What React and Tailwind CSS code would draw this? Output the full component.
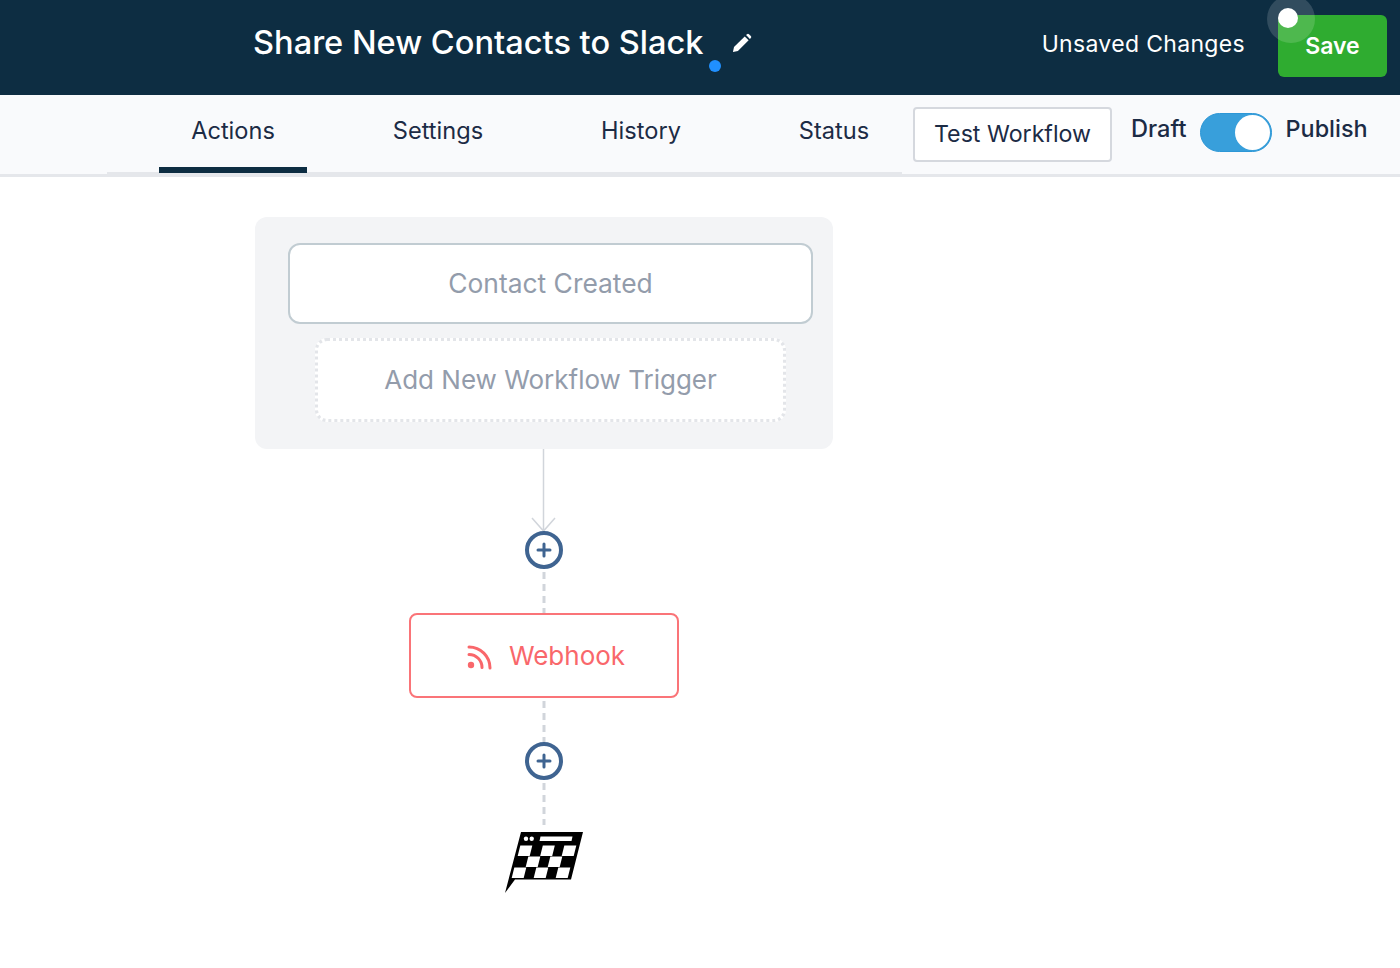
import React from "react";

const tabs = [
  { label: "Actions", className: "ml-[52px] w-[148px] border-[#0d2d42]" },
  { label: "Settings", className: "ml-[57px] w-[148px] border-transparent" },
  { label: "History", className: "ml-[55px] w-[148px] border-transparent" },
  { label: "Status", className: "ml-[51px] w-[136px] border-transparent" },
];

const PlusNode = () => (
  <div className="w-[38px] h-[38px] shrink-0 rounded-full border-4 border-[#3f6491] flex items-center justify-center bg-white">
    <svg width="16" height="16" viewBox="0 0 16 16">
      <path d="M8 2v12M2 8h12" stroke="#3f6491" strokeWidth="3" strokeLinecap="round" />
    </svg>
  </div>
);

const Dashed = ({ height }) => (
  <svg width="4" height={height} viewBox={`0 0 4 ${height}`} className="shrink-0 block">
    <line x1="2" y1="3" x2="2" y2={height} stroke="#d1d5db" strokeWidth="3" strokeDasharray="7 5" />
  </svg>
);

const FinishFlag = () => (
  <svg width="80" height="63" viewBox="0 0 80 63" className="shrink-0 block">
    <path d="M17 1L1 62L11 48.500H67L79 1Z" fill="#000" />
    <g fill="#fff">
      <circle cx="22" cy="7.700" r="2.200" />
      <circle cx="27.700" cy="7.700" r="2.200" />
      <path d="M36.500 5.500H68.500L67.500 10H35.500Z" />
      <path d="M16.300 14.500H28.300L25.700 25H13.700Z" />
      <path d="M38.800 14.500H50.800L48.200 25H36.200Z" />
      <path d="M60.300 14.500H72.300L69.700 25H57.700Z" />
      <path d="M24.300 25.500H36.300L33.700 36H21.700Z" />
      <path d="M46.300 25.500H58.300L55.700 36H43.700Z" />
      <path d="M10.300 36.500H22.300L19.700 47H7.700Z" />
      <path d="M32.300 36.500H44.300L41.700 47H29.700Z" />
      <path d="M54.300 36.500H66.300L63.700 47H51.700Z" />
    </g>
  </svg>
);

const App = () => {
  return (
    <div className="relative min-h-[968px] bg-white font-['Inter',sans-serif] overflow-hidden">
      <header className="h-[95px] bg-[#0d2d42] flex items-start pl-[253px]">
        <h1 className="mt-[22px] text-[32.600px] leading-[40px] font-medium text-white whitespace-nowrap">
          Share New Contacts to Slack
        </h1>
        <svg width="20" height="20" viewBox="0 0 22 22" className="ml-[28px] mt-[33px] shrink-0">
          <path d="M1 21l1.200-5.500L14 3.800l4.300 4.300L6.500 19.800z" fill="#fff" />
          <path d="M15.500 2.300l1-1a1.600 1.600 0 0 1 2.200 0l2 2a1.600 1.600 0 0 1 0 2.200l-1 1z" fill="#fff" />
        </svg>
        <span className="ml-auto mt-[29px] text-[23px] leading-[30px] tracking-[0.33px] text-white whitespace-nowrap">
          Unsaved Changes
        </span>
        <button className="ml-[33px] mr-[13px] mt-[15px] w-[109px] h-[62px] rounded-md bg-[#2fac30] text-white text-[23px] font-semibold">
          Save
        </button>
      </header>

      {/* blue status dot under the title */}
      <span className="absolute left-[709px] top-[60px] w-3 h-3 rounded-full bg-[#2090ff]" />

      {/* click indicator from the recording */}
      <span className="absolute left-[1267px] top-[-5px] w-12 h-12 rounded-full bg-white/15" />
      <span className="absolute left-[1278px] top-[8px] w-5 h-5 rounded-full bg-white" />

      <div className="h-[82px] bg-[#f9fafc] border-b-[3px] border-[#e5e7eb] flex items-start pl-[107px]">
        <nav className="w-[795px] h-[81px] flex items-start border-b-[4px] border-[#e5e7eb]">
          {tabs.map((tab) => (
            <div
              key={tab.label}
              className={`h-[78px] flex items-center justify-center border-b-[6px] text-[23.600px] text-[#1c2b45] ${tab.className}`}
            >
              {tab.label}
            </div>
          ))}
        </nav>
        <button className="ml-[11px] mt-[12px] w-[199px] h-[55px] rounded border-2 border-[#d5d8de] bg-white text-[23.200px] text-[#1c2b45]">
          Test Workflow
        </button>
        <span className="ml-[19px] mt-[18px] text-[23.600px] leading-[32px] font-medium text-[#1c2b45]">Draft</span>
        <div className="ml-[13px] mt-[18px] w-[72px] h-[39px] rounded-full bg-[#389fdb] flex items-center justify-end pr-[1px] border border-[#2d97d6]">
          <span className="w-[35px] h-[35px] rounded-full bg-white" />
        </div>
        <span className="ml-[14px] mt-[18px] text-[23.400px] leading-[32px] font-medium text-[#1c2b45]">Publish</span>
      </div>

      <main className="ml-[255px] mt-[40px] w-[578px] flex flex-col items-center">
        <section className="w-full h-[232px] rounded-xl bg-[#f3f4f6] pl-[33px] pt-[26px]">
          <div className="w-[525px] h-[81px] rounded-xl border-2 border-[#c1ccd2] bg-white flex items-center justify-center text-[26.400px] text-[#939cab]">
            Contact Created
          </div>
          <div className="ml-[27px] mt-[14px] w-[471px] h-[84px] pb-[2px] rounded-xl border-[3px] border-dotted border-[#e3e5e9] bg-white flex items-center justify-center text-[26px] text-[#939cab]">
            Add New Workflow Trigger
          </div>
        </section>

        <svg width="30" height="84" viewBox="0 0 30 84" className="shrink-0 block">
          <path d="M14.500 0V82M3 69l11.500 13L26 69" fill="none" stroke="#d1d5db" strokeWidth="1.500" />
        </svg>
        <div className="-mt-[2px]">
          <PlusNode />
        </div>
        <Dashed height={44} />

        <div className="w-[270px] h-[85px] shrink-0 rounded-lg border-2 border-[#fa7478] bg-white flex items-center justify-center gap-[16px] pl-[4px] text-[26px] text-[#f9676b]">
          <svg width="26" height="26" viewBox="0 0 26 26" fill="none" stroke="#f9676b" strokeWidth="3" strokeLinecap="round" className="mt-[5px]">
            <path d="M2 2a21 21 0 0 1 21 21" />
            <path d="M2 9.500a13 13 0 0 1 13 13" />
            <circle cx="4" cy="20" r="3.200" fill="#f9676b" stroke="none" />
          </svg>
          Webhook
        </div>

        <Dashed height={44} />
        <PlusNode />
        <Dashed height={45} />
        <div className="mt-[6px]">
          <FinishFlag />
        </div>
      </main>
    </div>
  );
};

export default App;
